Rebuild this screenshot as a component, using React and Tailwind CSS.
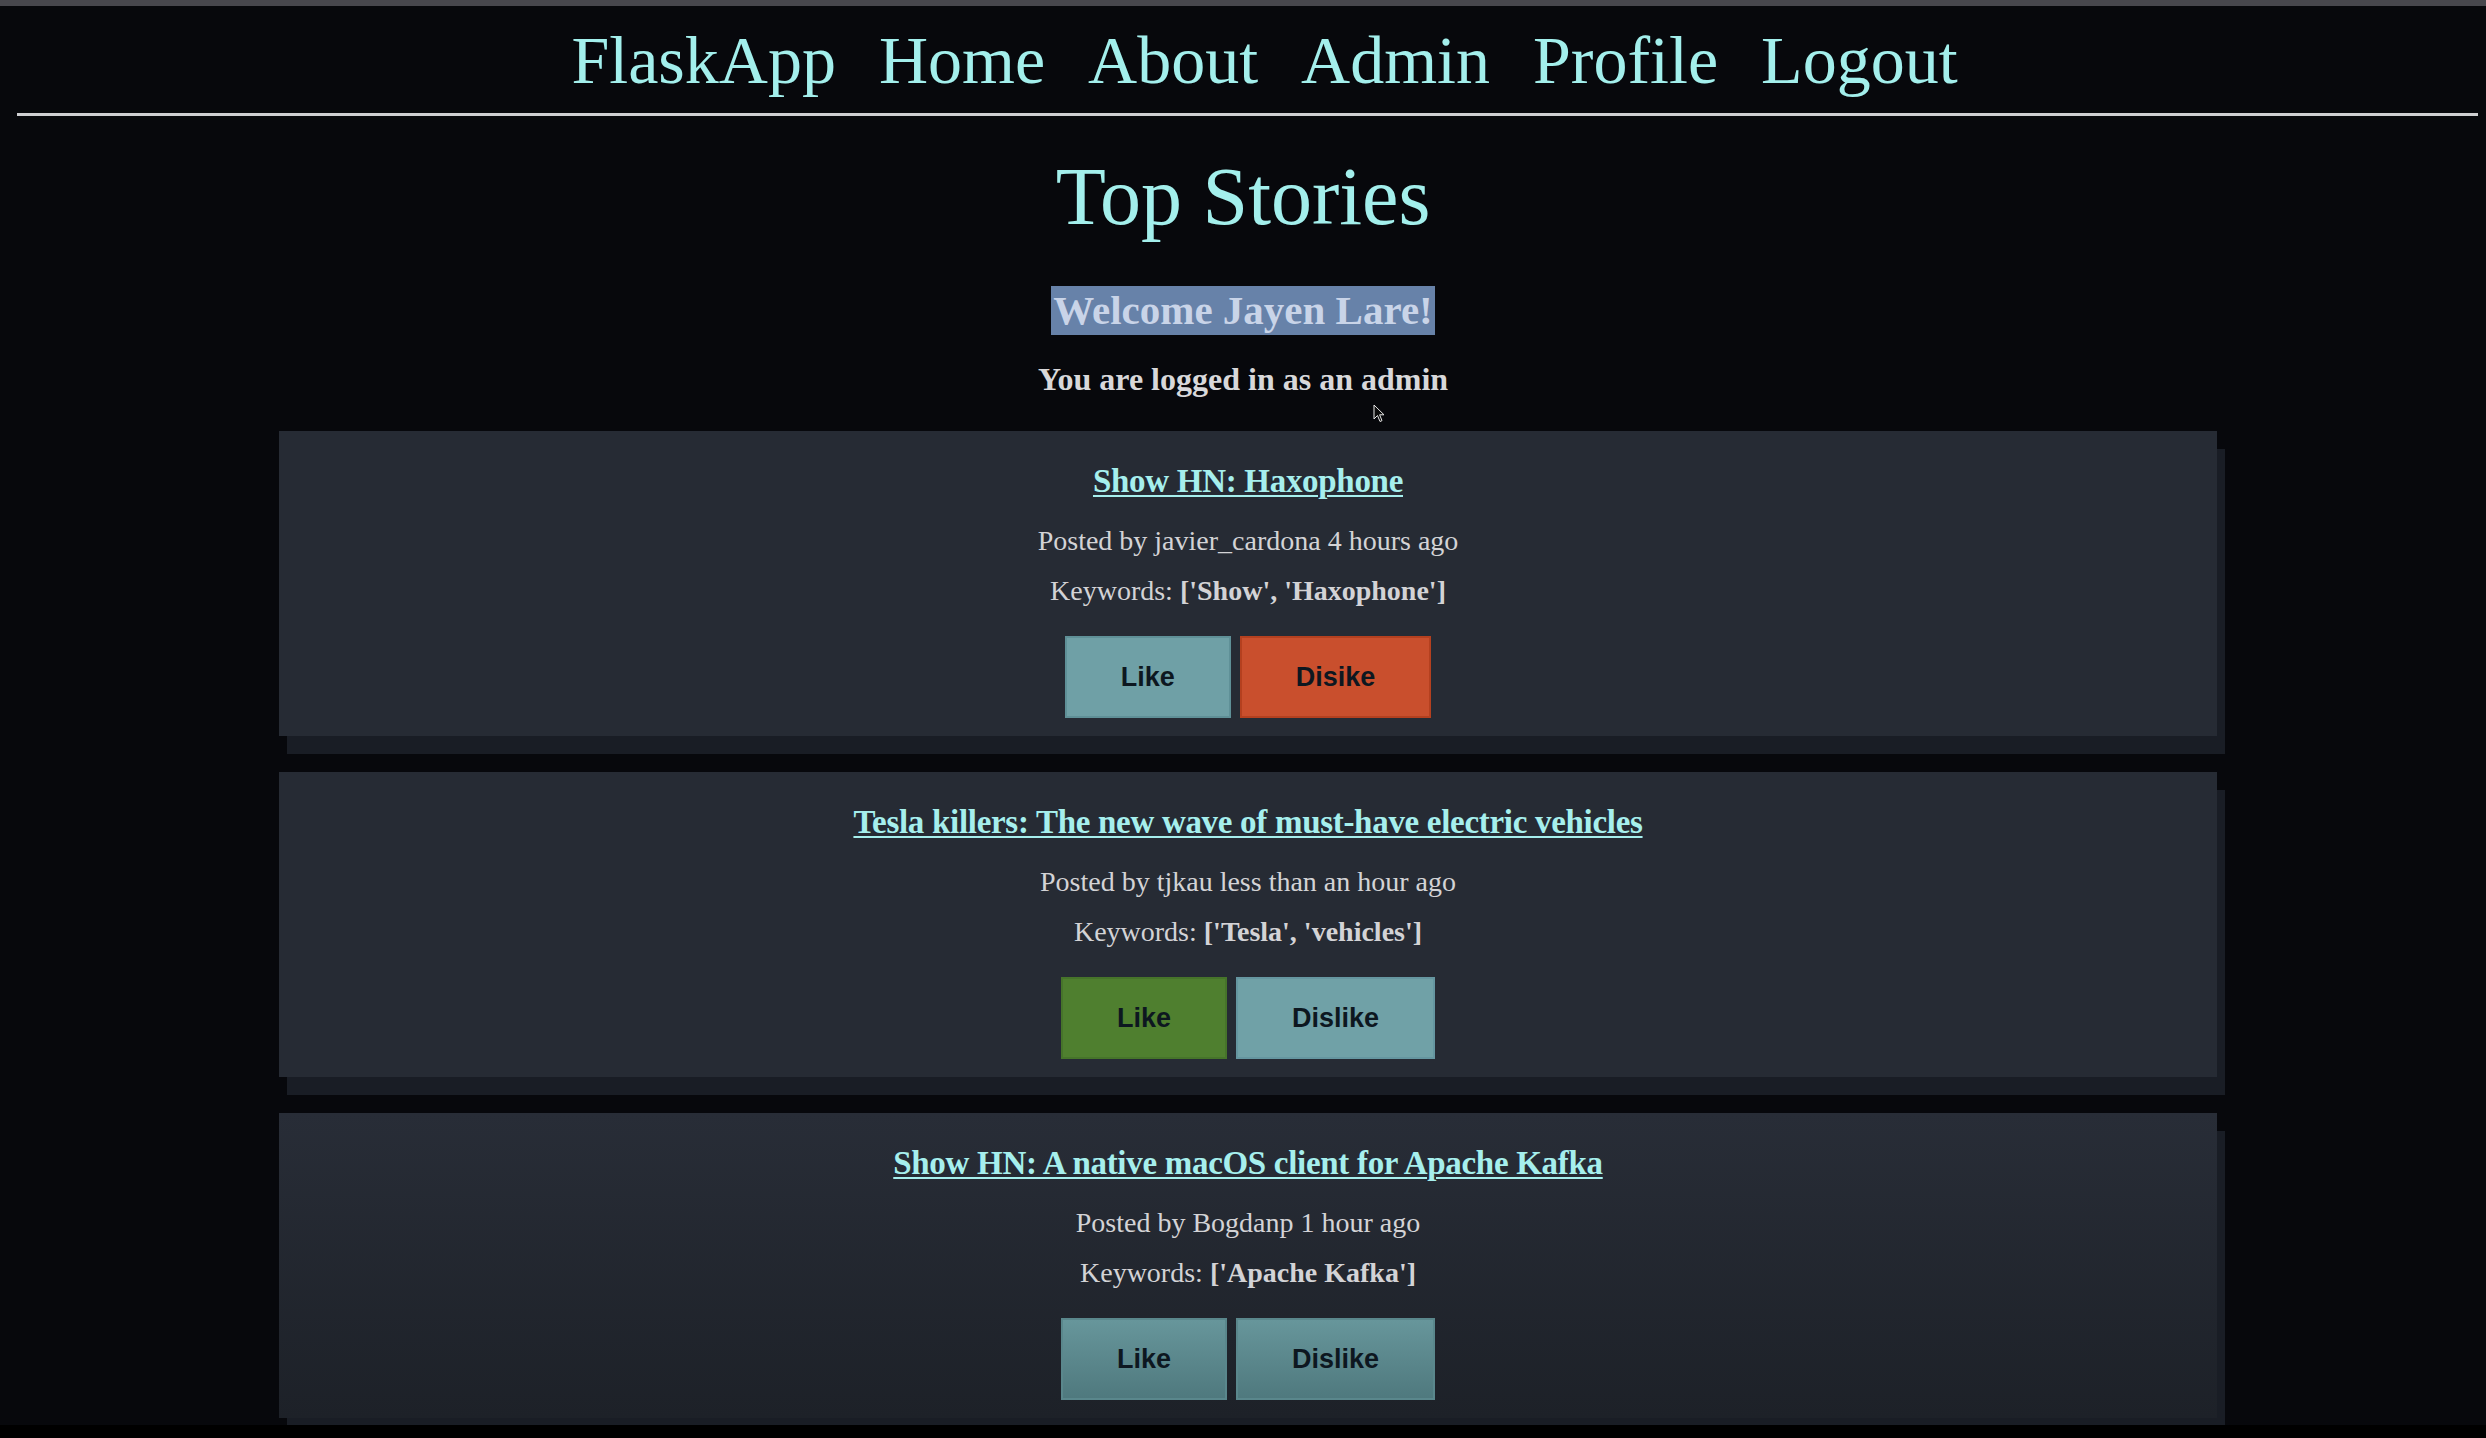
const navLinks = ["FlaskApp", "Home", "About", "Admin", "Profile", "Logout"];

const stories = [
  {
    title: "Show HN: Haxophone",
    meta: "Posted by javier_cardona 4 hours ago",
    keywords: "['Show', 'Haxophone']",
    like: { label: "Like", cls: "bg-[#6fa0a6] border-[#5f9097]" },
    dislike: { label: "Disike", cls: "bg-[#c94f2d] border-[#b4401f]" },
    card: "bg-[#262b34]",
  },
  {
    title: "Tesla killers: The new wave of must-have electric vehicles",
    meta: "Posted by tjkau less than an hour ago",
    keywords: "['Tesla', 'vehicles']",
    like: { label: "Like", cls: "bg-[#4f7f2f] border-[#46742a]" },
    dislike: { label: "Dislike", cls: "bg-[#70a1a7] border-[#6596a0]" },
    card: "bg-[#262b34]",
  },
  {
    title: "Show HN: A native macOS client for Apache Kafka",
    meta: "Posted by Bogdanp 1 hour ago",
    keywords: "['Apache Kafka']",
    like: { label: "Like", cls: "bg-gradient-to-b from-[#67969b] to-[#4f797e] border-[#5a878c]" },
    dislike: { label: "Dislike", cls: "bg-gradient-to-b from-[#67969b] to-[#4f797e] border-[#5a878c]" },
    card: "bg-gradient-to-b from-[#282d37] to-[#1d2128]",
  },
];

function VoteButton({ label, cls }) {
  return (
    <button
      className={`h-[82px] px-[54px] border-2 text-[27px] font-bold text-[#0d1720] ${cls}`}
      style={{ fontFamily: '"Liberation Sans", Arial, sans-serif' }}
    >
      {label}
    </button>
  );
}

function StoryCard({ story }) {
  return (
    <div className={`h-[305px] w-[1938px] flex flex-col items-center pt-[31px] shadow-[8px_18px_0_#191d25] ${story.card}`}>
      <a className="text-[33px] leading-[39px] tracking-[-0.3px] font-bold text-[#a6efed] underline underline-offset-[3px] decoration-2">
        {story.title}
      </a>
      <p className="mt-[24px] text-[28px] leading-[32px] text-[#d3d3d6]">{story.meta}</p>
      <p className="mt-[18px] text-[28px] leading-[32px] text-[#d3d3d6]">
        Keywords: <span className="font-bold">{story.keywords}</span>
      </p>
      <div className="mt-[29px] flex gap-[9px]">
        <VoteButton {...story.like} />
        <VoteButton {...story.dislike} />
      </div>
    </div>
  );
}

export default function App() {
  return (
    <div
      className="relative h-[1438px] w-full overflow-hidden bg-[#07080c] flex flex-col"
      style={{ fontFamily: '"Liberation Serif", "Times New Roman", serif' }}
    >
      <div className="h-[6px] bg-[#47474d] shrink-0" />

      {/* nav */}
      <nav className="pt-[15px] flex justify-center text-[68px] leading-[78px] text-[#a3efec]">
        {navLinks.map((l) => (
          <a key={l} className="ml-[43px]">{l}</a>
        ))}
      </nav>
      <div className="mt-[14px] ml-[17px] mr-[8px] h-[3px] bg-[#cfcfd2] shrink-0" />

      <main className="flex-1 overflow-hidden flex flex-col items-center">
        <h1 className="mt-[34px] text-[82px] leading-[94px] text-[#a3efec]">Top Stories</h1>
        <h2 className="mt-[42px] px-[2px] text-[41px] leading-[49px] font-bold bg-[#6782a9] text-[#c9d4e8]">
          Welcome Jayen Lare!
        </h2>
        <p className="mt-[26px] text-[32px] leading-[37px] font-bold text-[#d8d8da]">You are logged in as an admin</p>

        <div className="mt-[33px] ml-[10px] flex flex-col gap-[36px]">
          {stories.map((s) => (
            <StoryCard key={s.title} story={s} />
          ))}
        </div>
      </main>

      <div className="h-[13px] bg-black shrink-0 relative z-10" />

      {/* mouse cursor */}
      <svg className="absolute left-[1373px] top-[404px]" width="12" height="19" viewBox="0 0 12 19">
        <path d="M1 1 L1 15 L4.5 11.5 L7 17.5 L9 16.6 L6.6 10.8 L11 10.8 Z" fill="#0b0b0b" stroke="#e8e8e8" strokeWidth="1" />
      </svg>
    </div>
  );
}
